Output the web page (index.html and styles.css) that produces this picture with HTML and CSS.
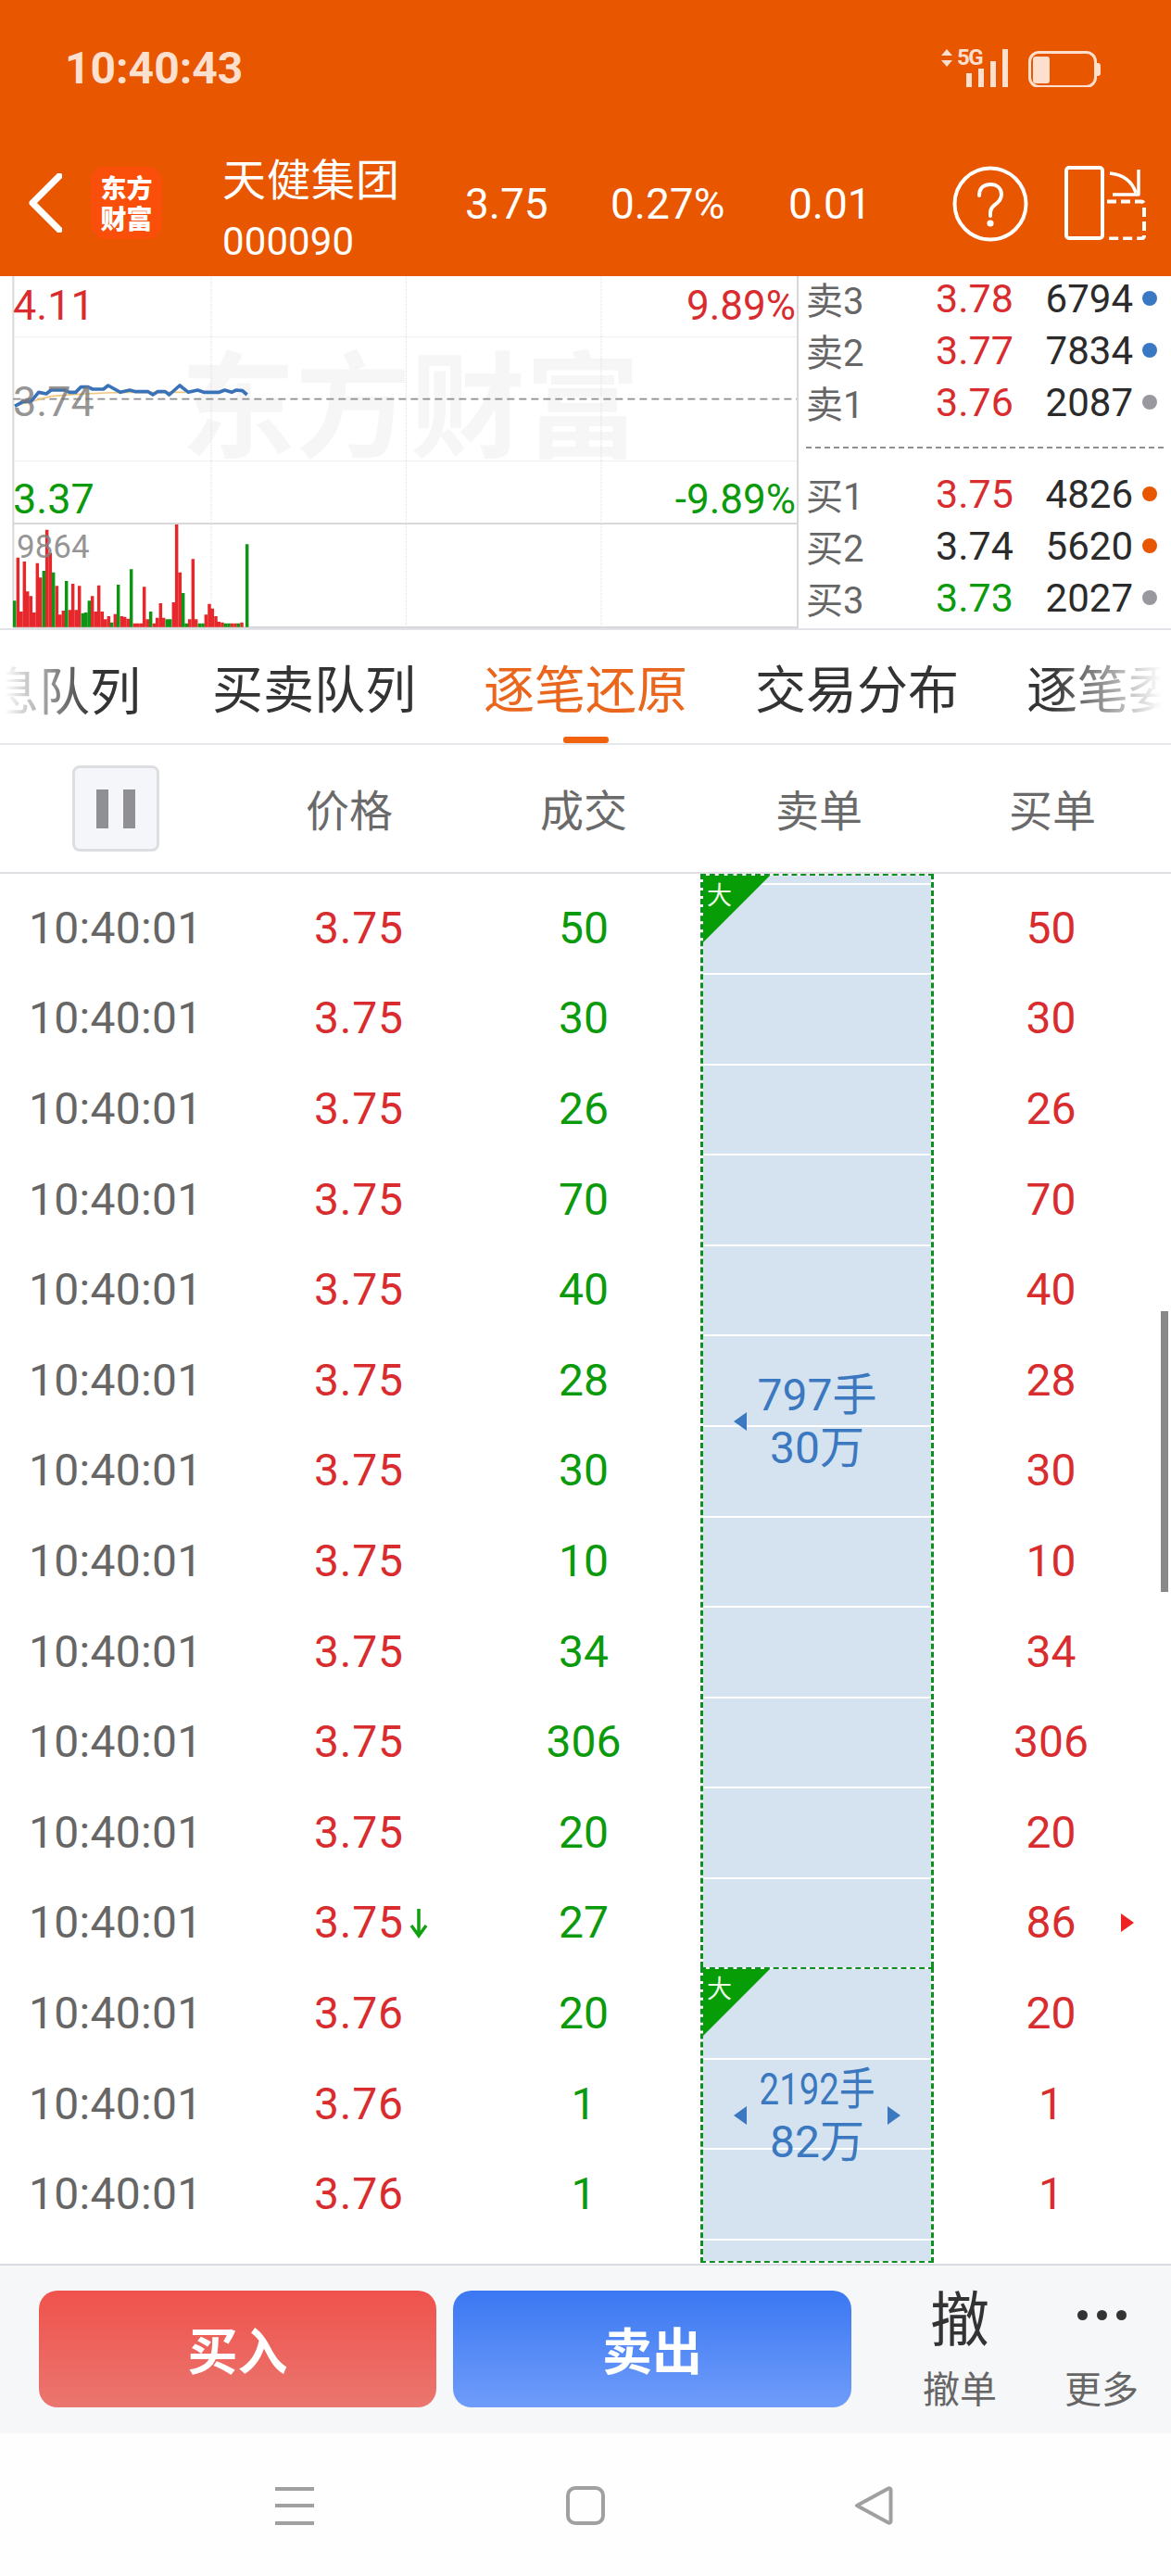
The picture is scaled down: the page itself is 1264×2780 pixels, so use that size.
FILE: index.html
```html
<!DOCTYPE html>
<html lang="zh-CN">
<head>
<meta charset="utf-8">
<title>天健集团</title>
<link rel="stylesheet" href="styles.css">
</head>
<body>
<div class="page">
  <header class="header">
    <div class="status">
      <span class="clock">10:40:43</span>
      <svg class="status-icons" width="176" height="44" viewBox="0 0 176 44">
        <path class="st-fill" d="M6 0l6 7H0zM6 19l6-7H0z" transform="translate(0 3)"/>
        <text class="st-5g" x="17" y="20">5G</text>
        <path class="st-fill" d="M27 29h6v15h-6zM40 24h6v20h-6zM53 16h6v28h-6zM66 3h6v41h-6z"/>
        <rect class="st-line" x="95.5" y="6.5" width="71" height="37" rx="10"/>
        <rect class="st-fill" x="99" y="11" width="18" height="29" rx="3"/>
        <path class="st-fill" d="M168 18h1a3 3 0 0 1 3 3v8a3 3 0 0 1-3 3h-1z"/>
      </svg>
    </div>
    <div class="titlebar">
      <svg class="back" width="36" height="64" viewBox="0 0 36 64"><path d="M33 3L4 32l29 29"/></svg>
      <div class="logo"><span>东方</span><span>财富</span></div>
      <div class="stock">
        <div class="stock-name">天健集团</div>
        <div class="stock-code">000090</div>
      </div>
      <div class="quote q1">3.75</div>
      <div class="quote q2">0.27%</div>
      <div class="quote q3">0.01</div>
      <svg class="help" width="82" height="82" viewBox="0 0 82 82">
        <circle cx="41" cy="41" r="38.5"/>
        <path d="M29 32c0-8 5-12 12-12s12 4 12 11c0 5-3 8-7 11-3 2-5 4-5 9v3"/>
        <circle class="dot" cx="41" cy="62" r="3.6"/>
      </svg>
      <svg class="rotate" width="88" height="80" viewBox="0 0 88 80">
        <rect x="2" y="2" width="39" height="76" rx="3"/>
        <path class="dash" d="M46 38.500h37a3 3 0 0 1 3 3v34a3 3 0 0 1-3 3H46"/>
        <path class="thin" d="M49 8C62 9 73 16 77 29M80 4V31H52"/>
      </svg>
    </div>
  </header>

  <section class="market">
    <div class="chart">
      <div class="watermark">东方财富</div>
      <svg class="chart-svg" width="860" height="382" viewBox="0 9 2580 1146">
        <path class="axis" d="M43 9V1146M43 810H2580M43 1146H2580"/>
        <path class="dots" d="M43 206H2580M43 608H2580M684 9V1146M1315 9V1146M1947 9V1146"/>
        <path class="mid" d="M43 407H2580"/>
        <path class="bars-r" d="M58 1145V920M68 1145V1095M79 1145V933M89 1145V1030M100 1145V1045M110 1145V1098M121 1145V938M131 1145V985M152 1145V830M163 1145V905M184 1145V1012M194 1145V1105M205 1145V1092M226 1145V1090M236 1145V1005M247 1145V1090M257 1145V1012M299 1145V1045M310 1145V1095M320 1145V1010M331 1145V1095M341 1145V1120M352 1145V1110M373 1145V1103M394 1145V1110M404 1145V1112M415 1145V1118M436 1145V1133M446 1145V1133M457 1145V1133M467 1145V1015M478 1145V1120M499 1145V1133M509 1145V1115M520 1145V1068M530 1145V1115M562 1145V1065M572 1145V813M583 1145V968M614 1145V1120M625 1145V925M635 1145V1120M667 1145V1105M678 1145V1070M688 1145V1085M699 1145V1110M709 1145V1128M720 1145V1130M751 1145V1133M762 1145V1133M783 1145V1130"/>
        <path class="bars-g" d="M47 1145V1060M142 1145V963M173 1145V968M215 1145V996M268 1145V1100M278 1145V1098M289 1145V1060M362 1145V1130M383 1145V1008M425 1145V958M488 1145V1095M541 1145V1120M551 1145V1120M593 1145V1035M604 1145V1133M646 1145V1133M657 1145V1133M730 1145V1133M741 1145V1133M772 1145V1133M800 1145V877"/>
        <path class="avg" d="M48 428L100 415L165 398L240 392L340 387L420 385L600 385"/>
        <path class="price" d="M48 430L75 415L100 415L125 385L150 390L165 378L210 378L225 385L245 385L262 368L285 368L300 375L335 375L350 363L390 385L420 378L440 383L480 383L495 393L510 383L535 383L548 393L582 363L610 385L640 378L660 385L710 385L728 378L750 385L765 378L785 380L800 393"/>
      </svg>
      <span class="lbl lbl-high">4.11</span>
      <span class="lbl lbl-pct-up">9.89%</span>
      <span class="lbl lbl-mid">3.74</span>
      <span class="lbl lbl-low">3.37</span>
      <span class="lbl lbl-pct-down">-9.89%</span>
      <span class="lbl lbl-vol">9864</span>
    </div>
    <div class="book">
      <div class="book-side sell-side">
        <div class="book-row"><span class="bk">卖3</span><span class="bp red">3.78</span><span class="bv">6794</span><i class="bd blue"></i></div>
        <div class="book-row"><span class="bk">卖2</span><span class="bp red">3.77</span><span class="bv">7834</span><i class="bd blue"></i></div>
        <div class="book-row"><span class="bk">卖1</span><span class="bp red">3.76</span><span class="bv">2087</span><i class="bd grey"></i></div>
      </div>
      <div class="book-split"></div>
      <div class="book-side">
        <div class="book-row"><span class="bk">买1</span><span class="bp red">3.75</span><span class="bv">4826</span><i class="bd orange"></i></div>
        <div class="book-row"><span class="bk">买2</span><span class="bp dark">3.74</span><span class="bv">5620</span><i class="bd orange"></i></div>
        <div class="book-row"><span class="bk">买3</span><span class="bp green">3.73</span><span class="bv">2027</span><i class="bd grey"></i></div>
      </div>
    </div>
  </section>

  <nav class="tabs">
    <span class="tab tab-cut-l">息队列</span>
    <span class="tab">买卖队列</span>
    <span class="tab active">逐笔还原</span>
    <span class="tab">交易分布</span>
    <span class="tab">逐笔委托</span>
    <i class="fade fade-l"></i>
    <i class="fade fade-r"></i>
  </nav>

  <div class="thead">
    <div class="th-first"><button class="pause"><i></i><i></i></button></div>
    <div class="th">价格</div>
    <div class="th">成交</div>
    <div class="th">卖单</div>
    <div class="th">买单</div>
  </div>

  <main class="ticks">
    <div class="row"><span class="t">10:40:01</span><span class="p red">3.75</span><span class="v green">50</span><span></span><span class="b red">50</span></div>
    <div class="row"><span class="t">10:40:01</span><span class="p red">3.75</span><span class="v green">30</span><span></span><span class="b red">30</span></div>
    <div class="row"><span class="t">10:40:01</span><span class="p red">3.75</span><span class="v green">26</span><span></span><span class="b red">26</span></div>
    <div class="row"><span class="t">10:40:01</span><span class="p red">3.75</span><span class="v green">70</span><span></span><span class="b red">70</span></div>
    <div class="row"><span class="t">10:40:01</span><span class="p red">3.75</span><span class="v green">40</span><span></span><span class="b red">40</span></div>
    <div class="row"><span class="t">10:40:01</span><span class="p red">3.75</span><span class="v green">28</span><span></span><span class="b red">28</span></div>
    <div class="row"><span class="t">10:40:01</span><span class="p red">3.75</span><span class="v green">30</span><span></span><span class="b red">30</span></div>
    <div class="row"><span class="t">10:40:01</span><span class="p red">3.75</span><span class="v green">10</span><span></span><span class="b red">10</span></div>
    <div class="row"><span class="t">10:40:01</span><span class="p red">3.75</span><span class="v green">34</span><span></span><span class="b red">34</span></div>
    <div class="row"><span class="t">10:40:01</span><span class="p red">3.75</span><span class="v green">306</span><span></span><span class="b red">306</span></div>
    <div class="row"><span class="t">10:40:01</span><span class="p red">3.75</span><span class="v green">20</span><span></span><span class="b red">20</span></div>
    <div class="row"><span class="t">10:40:01</span><span class="p red">3.75<svg class="down" width="22" height="34" viewBox="0 0 22 34"><path d="M11 2V31M3 20l8 11 8-11"/></svg></span><span class="v green">27</span><span></span><span class="b red">86<i class="flag"></i></span></div>
    <div class="row"><span class="t">10:40:01</span><span class="p red">3.76</span><span class="v green">20</span><span></span><span class="b red">20</span></div>
    <div class="row"><span class="t">10:40:01</span><span class="p red">3.76</span><span class="v green">1</span><span></span><span class="b red">1</span></div>
    <div class="row"><span class="t">10:40:01</span><span class="p red">3.76</span><span class="v green">1</span><span></span><span class="b red">1</span></div>

    <div class="blocks">
      <div class="block block-a">
        <div class="slot slot-head"></div>
        <div class="slot"></div><div class="slot"></div><div class="slot"></div><div class="slot"></div>
        <div class="slot"></div><div class="slot"></div><div class="slot"></div><div class="slot"></div>
        <div class="slot"></div><div class="slot"></div><div class="slot"></div>
        <div class="big"><span>大</span></div>
        <div class="sum">
          <i class="arr arr-l"></i>
          <div class="sum-text"><span>797手</span><span>30万</span></div>
          <i class="arr arr-r hidden"></i>
        </div>
      </div>
      <div class="block block-b">
        <div class="slot"></div><div class="slot"></div><div class="slot"></div>
        <div class="big"><span>大</span></div>
        <div class="sum">
          <i class="arr arr-l"></i>
          <div class="sum-text"><span class="squeeze">2192手</span><span>82万</span></div>
          <i class="arr arr-r"></i>
        </div>
      </div>
    </div>
    <div class="scrollbar"></div>
  </main>

  <footer class="actions">
    <button class="btn buy">买入</button>
    <button class="btn sell">卖出</button>
    <div class="tool tool-cancel"><span class="tool-big">撤</span><span class="tool-sub">撤单</span></div>
    <div class="tool tool-more"><span class="tool-dots"><i></i><i></i><i></i></span><span class="tool-sub">更多</span></div>
  </footer>

  <div class="sysnav">
    <svg class="nav-i" width="42" height="42" viewBox="0 0 42 42"><path d="M0 3h42M0 21h42M0 40h42"/></svg>
    <svg class="nav-i" width="42" height="42" viewBox="0 0 42 42"><rect x="2" y="2" width="38" height="38" rx="8"/></svg>
    <svg class="nav-i" width="42" height="42" viewBox="0 0 42 42"><path d="M3 21L37 2.500c1-.5 2.500 0 2.500 1.500v34c0 1.500-1.500 2-2.500 1.500z"/></svg>
  </div>
</div>
</body>
</html>
```
FILE: styles.css
```css
* { box-sizing: border-box; }
html, body { margin: 0; padding: 0; background: #fff; }
body { font-family: Roboto, "Noto Sans CJK SC", sans-serif; }
i { display: block; }
.red { color: #d92c2f; }
.green { color: #0b9a0b; }
.dark { color: #2b2b2b; }

.page { width: 1264px; height: 2780px; display: flex; flex-direction: column; overflow: hidden; }

/* header */
.header { height: 298px; background: #e85600; color: #fff; display: flex; flex-direction: column; }
.status { height: 150px; padding: 50px 72px 0 70px; display: flex; justify-content: space-between; align-items: flex-start; }
.clock { font-size: 48px; line-height: 46px; font-weight: 700; color: #fddfce; position: relative; top: 1px; }
.status-icons { display: block; }
.st-fill { fill: #fddfce; }
.st-line { fill: none; stroke: #fddfce; stroke-width: 3; }
.st-5g { fill: #fddfce; font: 700 24px "Roboto", sans-serif; letter-spacing: -1.500px; }
.titlebar { flex: 1; position: relative; display: flex; align-items: flex-start; }
.back { margin: 37px 0 0 31px; flex: none; display: block; fill: none; }
.back path { fill: none; stroke: #fff; stroke-width: 7; stroke-linecap: round; stroke-linejoin: round; }
.logo { width: 77px; height: 78px; margin: 30px 0 0 31px; flex: none; background: #f94f0a; border-radius: 16px; display: flex; flex-direction: column; align-items: center; justify-content: center; color: #fff; font: 900 28px/33px "Noto Sans CJK SC", sans-serif; }
.logo span { display: block; }
.stock { width: 254px; margin: 16px 0 0 65px; flex: none; }
.stock-name { font: 400 47px/50px "Noto Sans CJK SC", sans-serif; letter-spacing: 1px; }
.stock-code { font-size: 42px; line-height: 50px; margin-top: 20px; font-weight: 400; letter-spacing: .1px; }
.quote { font-size: 46px; line-height: 50px; font-weight: 400; margin-top: 45px; flex: none; }
.q1 { width: 157px; margin-left: 8px; }
.q2 { width: 192px; }
.q3 { width: 177px; }
.help { display: block; margin-top: 29px; flex: none; }
.help circle, .help path { fill: none; stroke: #fff; stroke-width: 4; stroke-linecap: round; }
.help .dot { fill: #fff; stroke: none; }
.rotate { display: block; margin: 29px 0 0 39px; flex: none; }
.rotate rect, .rotate path { fill: none; stroke: #fff; stroke-width: 4; stroke-linejoin: round; }
.rotate .dash { stroke-dasharray: 10 5; }
.rotate .thin { stroke-width: 3.500; }

/* market */
.market { height: 382px; display: flex; border-bottom: 2px solid #e2e3e6; }
.chart { width: 860px; height: 380px; flex: none; position: relative; overflow: hidden; }
.chart-svg { position: absolute; left: 0; top: 0; display: block; }
.watermark { position: absolute; left: 195px; top: 47px; font: 700 124px/170px "Noto Sans CJK SC", sans-serif; color: #f6f6f6; white-space: nowrap; }
.axis { fill: none; stroke: #d8d8d8; stroke-width: 6; }
.dots { fill: none; stroke: #dcdcdc; stroke-width: 3; stroke-dasharray: 3 3; }
.mid { fill: none; stroke: #8d8d8d; stroke-width: 5; stroke-dasharray: 24 15; }
.bars-r { fill: none; stroke: #e6282c; stroke-width: 10.5; }
.bars-g { fill: none; stroke: #0f9415; stroke-width: 10.5; }
.avg { fill: none; stroke: #f1c77c; stroke-width: 5; }
.price { fill: none; stroke: #3a72b8; stroke-width: 11; stroke-linejoin: round; }
.lbl { position: absolute; font-size: 45px; line-height: 50px; white-space: nowrap; }
.lbl-high { left: 14px; top: 7px; color: #d92c2f; }
.lbl-pct-up { right: 1px; top: 7px; color: #d92c2f; font-size: 44px; }
.lbl-mid { left: 14px; top: 111px; color: rgba(120, 120, 120, .8); }
.lbl-low { left: 14px; top: 216px; color: #0b9a0b; }
.lbl-pct-down { right: 1px; top: 216px; color: #0b9a0b; font-size: 44px; }
.lbl-vol { left: 18px; top: 268px; font-size: 35px; color: rgba(130, 130, 130, .85); }

.book { width: 404px; flex: none; border-left: 2px solid #d8d8d8; padding: 0 0 0 8px; display: flex; flex-direction: column; }
.book-side { display: flex; flex-direction: column; }
.sell-side { margin-top: -4px; }
.book-row { height: 56px; display: flex; align-items: center; font-size: 43px; }
.bk { width: 140px; color: #666; font-size: 40px; white-space: nowrap; }
.bp { width: 80px; white-space: nowrap; }
.bv { width: 133px; text-align: right; color: #2b2b2b; font-size: 42px; }
.bd { width: 16px; height: 16px; border-radius: 50%; margin-left: 10px; }
.blue { background: #3a78c4; }
.grey { background: #98989e; }
.orange { background: #e85600; }
.book-split { height: 0; margin: 20px 8px 21px 0; border-top: 2px dashed #8f8f8f; }

/* tabs */
.tabs { height: 124px; position: relative; overflow: hidden; border-bottom: 2px solid #e6e7ea; display: flex; align-items: center; white-space: nowrap; padding-left: 229px; gap: 73px; font: 400 55px/1 "Noto Sans CJK SC", sans-serif; color: #333; }
.tab { display: block; position: relative; flex: none; width: 220px; padding-bottom: 2px; }
.tab-cut-l { position: absolute; left: -13px; top: 35px; width: auto; }
.tab.active { color: #e9661c; }
.tab.active::after { content: ""; position: absolute; left: 86px; width: 49px; bottom: -32px; height: 7px; border-radius: 3px; background: #f2620e; }
.fade { position: absolute; top: 0; bottom: 0; }
.fade-l { left: 0; width: 100px; background: linear-gradient(to right, #fff 5%, rgba(255, 255, 255, 0)); }
.fade-r { right: 0; width: 130px; background: linear-gradient(to left, #fff 8%, rgba(255, 255, 255, 0)); }

/* table head */
.thead { height: 139px; border-bottom: 2px solid #dedfe2; display: grid; grid-template-columns: 244px 266px 240px 268px 236px; align-items: center; font: 400 47px/1 "Noto Sans CJK SC", sans-serif; color: #6a6a6a; }
.th { text-align: center; padding-bottom: 2px; }
.th-first { padding-left: 78px; }
.pause { width: 94px; height: 93px; background: #f5f6f9; border: 3px solid #dcdee2; border-radius: 8px; display: flex; align-items: center; justify-content: center; gap: 16px; padding: 0; }
.pause i { width: 13px; height: 42px; background: #8f8f94; }

/* ticks */
.ticks { height: 1500px; position: relative; overflow: hidden; padding-top: 10px; }
.row { height: 97.6px; display: grid; grid-template-columns: 280px 214px 272px 257px 1fr; align-items: center; font-size: 48px; line-height: 1; }
.t { padding-left: 31px; color: #666; letter-spacing: .3px; }
.p { position: relative; padding-left: 59px; white-space: nowrap; letter-spacing: .8px; }
.v { text-align: center; }
.b { position: relative; text-align: center; padding-right: 18px; }
.down { position: absolute; left: 161px; top: 7px; display: block; }
.down path { fill: none; stroke: #11a011; stroke-width: 3.500; }
.flag { position: absolute; left: 187px; top: 14px; width: 0; height: 0; border-left: 14px solid #ee2222; border-top: 10px solid transparent; border-bottom: 10px solid transparent; }

.blocks { position: absolute; left: 756px; top: 0; width: 252px; bottom: 1px; display: flex; flex-direction: column; }
.block { position: relative; background: #d5e3f1; background-clip: padding-box; border-style: dashed; border-color: #0f8f1f; border-width: 2px 3px; overflow: hidden; display: flex; flex-direction: column; }
.block-a { height: 1180px; border-bottom: 0; }
.block-b { flex: 1; }
.slot { height: 97.6px; flex: none; border-bottom: 2px solid #fff; }
.slot-head { height: 9.5px; }
.big { position: absolute; left: -3px; top: -2px; width: 77px; height: 77px; background: #079d07; clip-path: polygon(0 0, 100% 0, 0 100%); }
.big span { position: absolute; left: 7px; top: 7px; color: #f0fbe8; font: 400 27px/30px "Noto Sans CJK SC", sans-serif; }
.sum { position: absolute; inset: 0; display: flex; align-items: center; justify-content: center; gap: 14px; color: #3b78c0; }
.sum-text { width: 124px; display: flex; flex-direction: column; align-items: center; font-size: 48px; line-height: 57px; white-space: nowrap; }
.sum-text span { display: block; flex: none; }
.sum-text .squeeze { transform: scaleX(.8); }
.arr { width: 0; height: 0; border-top: 10px solid transparent; border-bottom: 10px solid transparent; }
.arr-l { border-right: 14px solid #3b78c0; }
.arr-r { border-left: 14px solid #3b78c0; }
.hidden { visibility: hidden; }
.scrollbar { position: absolute; right: 3px; top: 472px; width: 8px; height: 303px; background: #888; }

/* actions */
.actions { height: 183px; background: #f6f7f9; border-top: 2px solid #d9dbe0; display: flex; align-items: flex-start; padding: 27px 0 0 42px; }
.btn { height: 126px; border: 0; border-radius: 20px; color: #fff; font: 700 54px/1 "Noto Sans CJK SC", sans-serif; padding: 0; flex: none; }
.buy { width: 429px; margin-right: 18px; background: linear-gradient(#f0524c, #ea766f); }
.sell { width: 430px; background: linear-gradient(#3b78f2, #6f9cfa); }
.tool { display: flex; flex-direction: column; align-items: center; color: #666; width: 120px; flex: none; margin-top: -9px; }
.tool-cancel { margin-left: 57px; }
.tool-more { margin-left: 33px; }
.tool-big { font: 400 64px/70px "Noto Sans CJK SC", sans-serif; color: #333; }
.tool-dots { height: 70px; display: flex; align-items: center; gap: 10px; }
.tool-dots i { width: 11px; height: 11px; border-radius: 50%; background: #333; }
.tool-sub { font: 400 40px/44px "Noto Sans CJK SC", sans-serif; margin-top: 21px; color: #666; }

/* system nav */
.sysnav { flex: 1; background: #fefefe; display: flex; align-items: flex-start; padding: 57px 0 0 297px; gap: 272px; }
.nav-i { display: block; flex: none; }
.nav-i:last-child { margin-left: -3px; }
.nav-i path, .nav-i rect { fill: none; stroke: #a0a0a0; stroke-width: 4; stroke-linejoin: round; }
```
